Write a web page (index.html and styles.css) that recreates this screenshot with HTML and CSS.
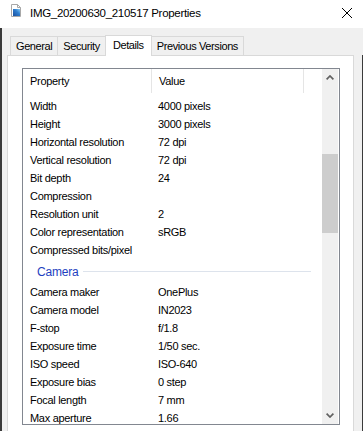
FILE: index.html
```html
<!DOCTYPE html>
<html>
<head>
    <title>IMG_20200630_210517 Properties</title>
    <link rel="stylesheet" href="styles.css">
</head>
<body>
    <div class="titlebar">
        <svg class="file-icon" width="10" height="13" viewBox="0 0 10 13">
            <defs>
                <linearGradient id="pic" x1="0" y1="1" x2="1" y2="0">
                    <stop offset="0" stop-color="#1b4f9c"/>
                    <stop offset="0.6" stop-color="#2f7fd0"/>
                    <stop offset="1" stop-color="#8fd0f5"/>
                </linearGradient>
            </defs>
            <path d="M0.5 0.5h6l3 3v9h-9z" fill="#fff" stroke="#a8a8a8"/>
            <path d="M6.5 0.5v3h3" fill="none" stroke="#a8a8a8"/>
            <rect x="2" y="5" width="7" height="7" fill="url(#pic)"/>
        </svg>
        <span class="title">IMG_20200630_210517 Properties</span>
        <svg class="close-btn" width="10" height="10" viewBox="0 0 10 10">
            <path d="M0 0L10 10M10 0L0 10" stroke="#000" stroke-width="1"/>
        </svg>
    </div>

    <div class="client">
        <div class="tabs">
            <div class="tab">General</div>
            <div class="tab">Security</div>
            <div class="tab active">Details</div>
            <div class="tab">Previous Versions</div>
        </div>

        <div class="page-wrap">
            <div class="page">
                <div class="listview">
                    <div class="list-main">
                        <div class="list-header">
                            <div class="hcell hcell-prop">Property</div>
                            <div class="hcell hcell-val">Value</div>
                        </div>

                        <div class="row"><span>Width</span><span>4000 pixels</span></div>
                        <div class="row"><span>Height</span><span>3000 pixels</span></div>
                        <div class="row"><span>Horizontal resolution</span><span>72 dpi</span></div>
                        <div class="row"><span>Vertical resolution</span><span>72 dpi</span></div>
                        <div class="row"><span>Bit depth</span><span>24</span></div>
                        <div class="row"><span>Compression</span><span></span></div>
                        <div class="row"><span>Resolution unit</span><span>2</span></div>
                        <div class="row"><span>Color representation</span><span>sRGB</span></div>
                        <div class="row"><span>Compressed bits/pixel</span><span></span></div>

                        <div class="group">
                            <span class="group-name">Camera</span>
                            <div class="group-line"></div>
                        </div>

                        <div class="row"><span>Camera maker</span><span>OnePlus</span></div>
                        <div class="row"><span>Camera model</span><span>IN2023</span></div>
                        <div class="row"><span>F-stop</span><span>f/1.8</span></div>
                        <div class="row"><span>Exposure time</span><span>1/50 sec.</span></div>
                        <div class="row"><span>ISO speed</span><span>ISO-640</span></div>
                        <div class="row"><span>Exposure bias</span><span>0 step</span></div>
                        <div class="row"><span>Focal length</span><span>7 mm</span></div>
                        <div class="row"><span>Max aperture</span><span>1.66</span></div>
                    </div>

                    <div class="scrollbar">
                        <div class="sb-btn">
                            <svg width="8" height="5" viewBox="0 0 8 5">
                                <path d="M0.6 4.4L4 1L7.4 4.4" stroke="#606060" stroke-width="1.7" fill="none"/>
                            </svg>
                        </div>
                        <div class="sb-track">
                            <div class="sb-thumb"></div>
                        </div>
                        <div class="sb-btn">
                            <svg width="8" height="5" viewBox="0 0 8 5">
                                <path d="M0.6 0.6L4 4L7.4 0.6" stroke="#606060" stroke-width="1.7" fill="none"/>
                            </svg>
                        </div>
                    </div>
                </div>
            </div>
        </div>
    </div>
</body>
</html>
```

FILE: styles.css
```css
body {
    margin: 0;
    width: 363px;
    height: 431px;
    overflow: hidden;
    background: #f0f0f0;
    font-family: 'Liberation Sans', Arial, sans-serif;
    font-size: 11px;
    letter-spacing: -0.3px;
    color: #000;
}
.titlebar {
    height: 28px;
    background: #fff;
    display: flex;
    align-items: flex-start;
    padding: 0 11px;
}
.file-icon {
    margin-top: 4px;
    flex-shrink: 0;
}
.title {
    margin-left: 9px;
    font-size: 11.5px;
    line-height: 28px;
    height: 28px;
    margin-top: -1px;
}
.close-btn {
    margin-left: auto;
    margin-top: 8px;
}
.client {
    border-left: 2px solid #3a3a3a;
    height: 403px;
    padding: 6px 0 0 5px;
    box-sizing: border-box;
}
.tabs {
    display: flex;
    align-items: flex-end;
    margin-left: 3px;
    height: 21px;
}
.tab {
    height: 18px;
    line-height: 18px;
    padding: 0 5px;
    letter-spacing: -0.4px;
    border: 1px solid #d9d9d9;
    border-bottom: none;
    margin-right: -1px;
    background: #f0f0f0;
    position: relative;
}
.tab.active {
    height: 20px;
    line-height: 19px;
    padding: 0 7px;
    margin-bottom: -1px;
    background: #fff;
    z-index: 1;
}
.page-wrap {
    display: flex;
    padding-right: 8px;
    border-right: 1px solid #3a3a3a;
    height: 376px;
}
.page {
    flex: 1;
    background: #fff;
    border: 1px solid #d9d9d9;
    border-bottom: none;
    padding: 12px 13px 0 14px;
}
.listview {
    display: flex;
    height: 357px;
    box-sizing: border-box;
    border: 1px solid #828790;
    overflow: hidden;
}
.list-main {
    flex: 1;
    overflow: hidden;
}
.list-header {
    display: flex;
    height: 28px;
}
.hcell {
    height: 24px;
    line-height: 24px;
    padding-left: 7px;
    box-sizing: border-box;
    border-right: 1px solid #e5e5e5;
}
.hcell-prop {
    width: 129px;
}
.hcell-val {
    width: 152px;
}
.row {
    display: grid;
    grid-template-columns: 128px 1fr;
    height: 18px;
    line-height: 18px;
    padding-left: 7px;
    white-space: nowrap;
}
.group {
    display: flex;
    align-items: center;
    height: 24px;
    padding: 0 11px 0 14px;
}
.group-name {
    color: #1e3fbf;
    font-size: 12px;
    letter-spacing: -0.2px;
    line-height: 24px;
    margin-top: 1px;
}
.group-line {
    flex: 1;
    height: 1px;
    background: #dde3ec;
    margin-left: 5px;
}
.scrollbar {
    width: 16px;
    margin-right: 1px;
    background: #f0f0f0;
    display: flex;
    flex-direction: column;
}
.sb-btn {
    height: 17px;
    display: flex;
    align-items: center;
    justify-content: center;
}
.sb-track {
    flex: 1;
}
.sb-thumb {
    margin-top: 68px;
    height: 79px;
    background: #cdcdcd;
}
```
